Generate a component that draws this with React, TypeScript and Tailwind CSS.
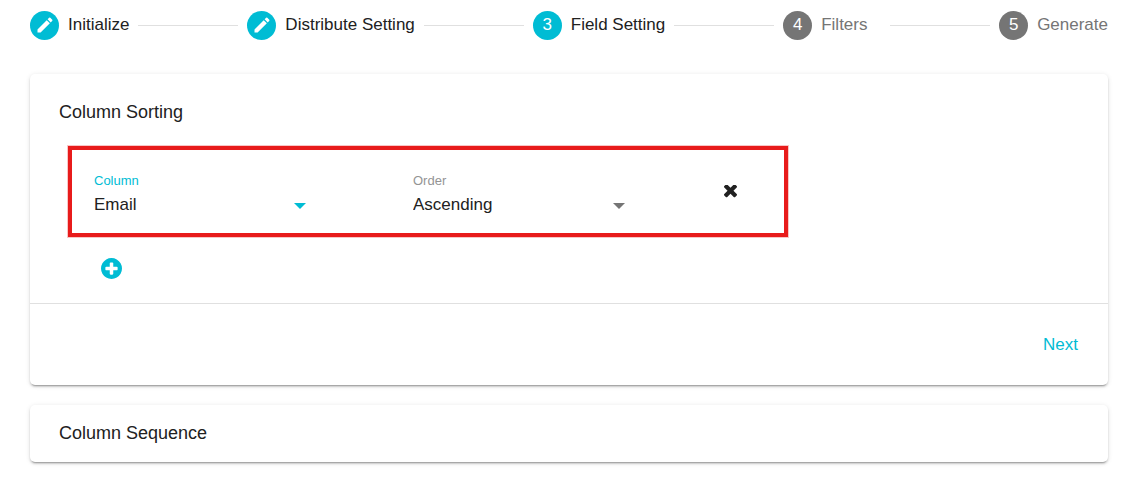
import { useState } from "react";
import { MdEdit } from "react-icons/md";
import clsx from "clsx";

type StepState = "done" | "active" | "pending";

const steps: { label: string; state: StepState }[] = [
  { label: "Initialize", state: "done" },
  { label: "Distribute Setting", state: "done" },
  { label: "Field Setting", state: "active" },
  { label: "Filters", state: "pending" },
  { label: "Generate", state: "pending" },
];

function Stepper() {
  return (
    <ol className="flex items-center gap-[9px]">
      {steps.map((step, i) => (
        <li
          key={step.label}
          className={clsx("flex items-center gap-[9px]", i < steps.length - 1 && "flex-auto")}
        >
          <span
            className={clsx(
              "flex size-[29px] shrink-0 items-center justify-center rounded-full pb-px text-[17px] leading-5 text-white",
              step.state === "pending" ? "bg-[#757575]" : "bg-[#00bcd4]"
            )}
          >
            {step.state === "done" ? <MdEdit className="size-5" /> : i + 1}
          </span>
          <span
            className={clsx(
              "min-w-[60px] pb-px text-[17px] leading-5 whitespace-nowrap",
              step.state === "pending" ? "text-[#757575]" : "text-[#212121]"
            )}
          >
            {step.label}
          </span>
          {i < steps.length - 1 && <span className="h-px flex-1 bg-[#e0e0e0]" />}
        </li>
      ))}
    </ol>
  );
}

type SelectFieldProps = {
  id: string;
  label: string;
  options: string[];
  focused?: boolean;
};

function SelectField({ id, label, options, focused }: SelectFieldProps) {
  const [value, setValue] = useState(options[0]);

  return (
    <div className="flex w-[212px] flex-col gap-[2px]">
      <label
        htmlFor={id}
        className={clsx("text-[13px] leading-5", focused ? "text-[#00bcd4]" : "text-[#949494]")}
      >
        {label}
      </label>
      <div className="relative">
        <select
          id={id}
          value={value}
          onChange={(e) => setValue(e.target.value)}
          className="block h-6 w-full appearance-none bg-transparent text-[17px] leading-6 text-[#212121] outline-none"
        >
          {options.map((option) => (
            <option key={option}>{option}</option>
          ))}
        </select>
        <svg
          viewBox="0 0 12 6"
          className={clsx(
            "pointer-events-none absolute top-[10px] right-0 h-[6px] w-3",
            focused ? "fill-[#00bcd4]" : "fill-[#757575]"
          )}
        >
          <path d="M0 0h12L6 6z" />
        </svg>
      </div>
    </div>
  );
}

function RemoveIcon() {
  return (
    <svg viewBox="302 434 1188 1188" className="size-[13px]" fill="currentColor">
      <path d="M1490 1322q0 40-28 68l-136 136q-28 28-68 28t-68-28l-294-294-294 294q-28 28-68 28t-68-28l-136-136q-28-28-28-68t28-68l294-294-294-294q-28-28-28-68t28-68l136-136q28-28 68-28t68 28l294 294 294-294q28-28 68-28t68 28l136 136q28 28 28 68t-28 68l-294 294 294 294q28 28 28 68z" />
    </svg>
  );
}

function AddIcon() {
  return (
    <svg viewBox="128 128 1536 1536" className="size-[21px]" fill="currentColor">
      <path d="M1344 960v-128q0-26-19-45t-45-19h-256v-256q0-26-19-45t-45-19h-128q-26 0-45 19t-19 45v256h-256q-26 0-45 19t-19 45v128q0 26 19 45t45 19h256v256q0 26 19 45t45 19h128q26 0 45-19t19-45v-256h256q26 0 45-19t19-45zm320-64q0 209-103 385.5t-279.5 279.5-385.5 103-385.5-103-279.5-279.5-103-385.5 103-385.5 279.5-279.5 385.5-103 385.5 103 279.5 279.5 103 385.5z" />
    </svg>
  );
}

const cardClass =
  "rounded-[5px] bg-white shadow-[0_3px_1px_-2px_rgba(0,0,0,0.2),0_2px_2px_0_rgba(0,0,0,0.14),0_1px_5px_0_rgba(0,0,0,0.12)]";

export default function App() {
  return (
    <main className="bg-white pt-[11px] pr-5 pb-6 pl-[30px] font-['Liberation_Sans',Arial,sans-serif] text-[#212121]">
      <Stepper />

      <section className={clsx(cardClass, "mt-[34px]")}>
        <div className="px-[29px] pt-[26px] pb-6">
          <h2 className="text-[18px] leading-6">Column Sorting</h2>

          <div className="mt-[22px] ml-[9px] flex max-w-[720px] items-start justify-between border-4 border-[#e81b1b] pt-[21px] pr-[34px] pb-4 pl-[22px] shadow-[0_0_0_1px_rgba(232,27,27,0.25)]">
            <div className="flex gap-[107px]">
              <SelectField id="column" label="Column" options={["Email", "Name"]} focused />
              <SelectField id="order" label="Order" options={["Ascending", "Descending"]} />
            </div>
            <button
              type="button"
              aria-label="Remove column"
              className="flex size-10 items-center justify-center"
            >
              <RemoveIcon />
            </button>
          </div>

          <button type="button" aria-label="Add column" className="mt-[21px] ml-[42px] block text-[#00bcd4]">
            <AddIcon />
          </button>
        </div>

        <div className="flex justify-end border-t border-[#e0e0e0] px-[30px] pt-[29px] pb-7">
          <button type="button" className="text-[17px] leading-6 text-[#00bcd4]">
            Next
          </button>
        </div>
      </section>

      <section className={clsx(cardClass, "mt-5 px-[29px] pt-4 pb-[17px]")}>
        <h2 className="text-[18px] leading-6">Column Sequence</h2>
      </section>
    </main>
  );
}
